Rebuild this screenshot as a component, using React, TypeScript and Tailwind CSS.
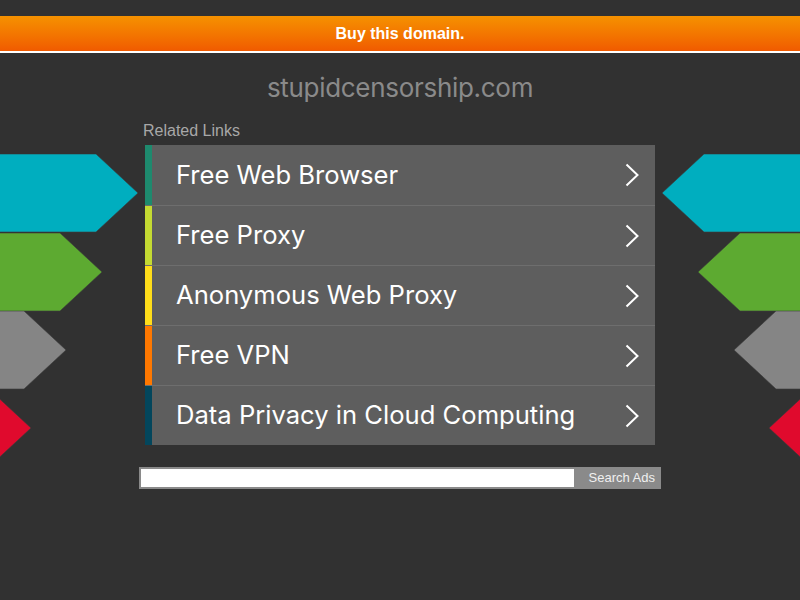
// App.tsx - parked domain page for stupidcensorship.com

import React from 'react';

const links = [
    { title: 'Free Web Browser', color: 'bg-[#1e8a6e]' },
    { title: 'Free Proxy', color: 'bg-[#c4da32]' },
    { title: 'Anonymous Web Proxy', color: 'bg-[#ffdd1a]' },
    { title: 'Free VPN', color: 'bg-[#ff7800]' },
    { title: 'Data Privacy in Cloud Computing', color: 'bg-[#03465c]' },
];

// decorative arrows on the sides: [top, tip distance from page edge, color]
const arrows: [number, number, string][] = [
    [154, 138, '#00aebf'],
    [233, 102, '#5daa31'],
    [311, 66, '#858585'],
    [389, 31, '#e00a2d'],
];

const Chevron = () => (
    <svg width="14" height="24" viewBox="0 0 14 24" fill="none">
        <path d="M1.5 1.5 L12.5 12 L1.5 22.5" stroke="white" strokeWidth="2" />
    </svg>
);

const Arrow = ({ top, tip, color, right }: { top: number; tip: number; color: string; right?: boolean }) => {
    // flat-ended arrow, 78px tall, 42px point
    const w = tip + 60;
    const pts = `0,0 ${w - 42},0 ${w},39 ${w - 42},78 0,78`;
    return (
        <svg
            className="absolute"
            style={{
                top,
                left: right ? undefined : tip - w,
                right: right ? tip - w : undefined,
                transform: right ? 'scaleX(-1)' : undefined,
            }}
            width={w}
            height={79}
            viewBox={`0 0 ${w} 79`}
        >
            <polygon points={pts} fill={color} stroke="#3c3c3c" strokeWidth="0.6" />
        </svg>
    );
};

const App: React.FC = () => {
    return (
        <div className="relative w-full h-[600px] overflow-hidden bg-[#313131] font-['Liberation_Sans',Arial,sans-serif]">
            {/* Side arrows */}
            {arrows.map(([top, tip, color]) => (
                <Arrow key={'l' + top} top={top} tip={tip} color={color} />
            ))}
            {arrows.map(([top, tip, color]) => (
                <Arrow key={'r' + top} top={top} tip={tip} color={color} right />
            ))}

            <div className="pt-4">
                {/* Buy banner */}
                <div className="h-[37px] flex items-center justify-center bg-gradient-to-b from-[#f59100] to-[#f05a00] border-b-2 border-white">
                    <span className="text-white font-bold text-base">Buy this domain.</span>
                </div>

                {/* Domain name */}
                <h1 className="mt-[19px] text-center text-[26px] leading-[32px] text-[#8a8a8a] font-['Inter','Open_Sans',sans-serif] tracking-[-0.3px]">
                    stupidcensorship.com
                </h1>

                <div className="w-[510px] mx-auto mt-[17px]">
                    <div className="text-[#a8a8a8] text-base leading-[20px] -ml-[2px]">Related Links</div>

                    {/* Related links list */}
                    <div className="mt-[4px]">
                        {links.map((link, i) => (
                            <div key={link.title} className={`flex h-[60px] ${i > 0 ? 'border-t border-[#6e6e6e]' : ''}`}>
                                <div className={`w-[7px] shrink-0 ${link.color}`} />
                                <div className="flex-1 flex items-center justify-between bg-[#5e5e5e] pl-[24px] pr-[16px]">
                                    <span className="text-white text-[25.6px] font-['Inter','Open_Sans',sans-serif]">{link.title}</span>
                                    <Chevron />
                                </div>
                            </div>
                        ))}
                    </div>
                </div>

                {/* Search */}
                <div className="w-[522px] mx-auto mt-[22px] flex h-[22px] bg-[#8a8a8a] p-[2px]">
                    <input className="flex-1 bg-white h-full outline-none" />
                    <button className="w-[85px] text-right pr-[4px] text-[#f0f0f0] text-[13px] leading-[18px]">Search Ads</button>
                </div>
            </div>
        </div>
    );
};

export default App;
